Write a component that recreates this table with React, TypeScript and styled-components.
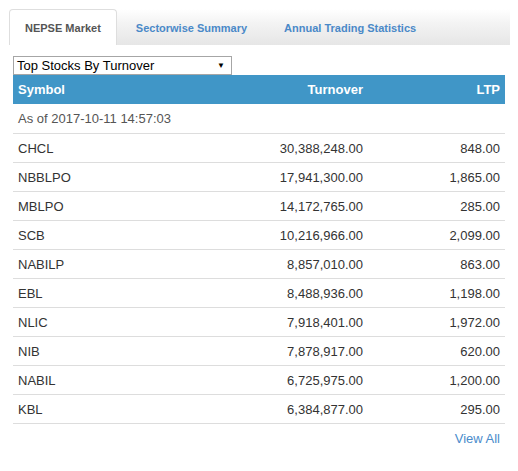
import React from "react";
import styled, { createGlobalStyle } from "styled-components";

const Global = createGlobalStyle`
  html, body { margin: 0; padding: 0; background: #fff; }
  body { font-family: "Liberation Sans", Arial, sans-serif; }
`;

const Wrapper = styled.div`
  width: 501px;
  padding: 9px 0 0 9px;
`;

const TabBar = styled.div`
  display: flex;
  align-items: stretch;
  height: 36px;
  background: linear-gradient(to bottom, #ffffff 0%, #f3f3f3 40%, #e6e6e6 100%);
`;

const Tab = styled.div<{ $active?: boolean }>`
  display: flex;
  align-items: center;
  padding: ${(p) => (p.$active ? "0 15px" : "0 17px")};
  font-size: 11px;
  font-weight: bold;
  color: ${(p) => (p.$active ? "#555" : "#4a89c8")};
  background: ${(p) => (p.$active ? "#fff" : "transparent")};
  border: 1px solid ${(p) => (p.$active ? "#dedede" : "transparent")};
  border-bottom: none;
  border-radius: 4px 4px 0 0;
  margin-right: 1px;
`;

const Panel = styled.div`
  padding: 11px 5px 0 4px;
`;

const SelectBox = styled.div`
  box-sizing: border-box;
  width: 219px;
  height: 19px;
  border: 1px solid #a6a6a6;
  display: flex;
  align-items: center;
  justify-content: space-between;
  padding: 0 6px 0 3px;
  font-size: 13px;
  color: #000;
`;

const Arrow = styled.span`
  font-size: 8px;
  color: #000;
`;

const Table = styled.div`
  width: 492px;
`;

const Row = styled.div<{ $head?: boolean }>`
  display: grid;
  grid-template-columns: 1fr 150px 137px;
  height: ${(p) => (p.$head ? "29px" : "28px")};
  align-items: center;
  font-size: 13px;
  background: ${(p) => (p.$head ? "#4096c7" : "#fff")};
  color: ${(p) => (p.$head ? "#fff" : "#333")};
  font-weight: ${(p) => (p.$head ? "bold" : "normal")};
  border-bottom: ${(p) => (p.$head ? "none" : "1px solid #dddddd")};
`;

const Cell = styled.div<{ $right?: boolean }>`
  padding: 0 5px;
  text-align: ${(p) => (p.$right ? "right" : "left")};
  white-space: nowrap;
`;

const AsOf = styled.div`
  height: 29px;
  display: flex;
  align-items: center;
  padding: 0 5px;
  font-size: 13px;
  color: #555;
  border-bottom: 1px solid #dddddd;
`;

const Footer = styled.div`
  display: flex;
  justify-content: flex-end;
  padding: 7px 5px 0 0;
`;

const ViewAll = styled.a`
  font-size: 13px;
  color: #4a8ccb;
  text-decoration: none;
`;

const data: [string, string, string][] = [
  ["CHCL", "30,388,248.00", "848.00"],
  ["NBBLPO", "17,941,300.00", "1,865.00"],
  ["MBLPO", "14,172,765.00", "285.00"],
  ["SCB", "10,216,966.00", "2,099.00"],
  ["NABILP", "8,857,010.00", "863.00"],
  ["EBL", "8,488,936.00", "1,198.00"],
  ["NLIC", "7,918,401.00", "1,972.00"],
  ["NIB", "7,878,917.00", "620.00"],
  ["NABIL", "6,725,975.00", "1,200.00"],
  ["KBL", "6,384,877.00", "295.00"],
];

export default function App() {
  return (
    <>
      <Global />
      <Wrapper>
        <TabBar>
          <Tab $active>NEPSE Market</Tab>
          <Tab>Sectorwise Summary</Tab>
          <Tab>Annual Trading Statistics</Tab>
        </TabBar>
        <Panel>
          <SelectBox>
            <span>Top Stocks By Turnover</span>
            <Arrow>▼</Arrow>
          </SelectBox>
          <Table>
            <Row $head>
              <Cell>Symbol</Cell>
              <Cell $right>Turnover</Cell>
              <Cell $right>LTP</Cell>
            </Row>
            <AsOf>As of 2017-10-11 14:57:03</AsOf>
            {data.map(([s, t, l]) => (
              <Row key={s}>
                <Cell>{s}</Cell>
                <Cell $right>{t}</Cell>
                <Cell $right>{l}</Cell>
              </Row>
            ))}
          </Table>
          <Footer>
            <ViewAll href="#">View All</ViewAll>
          </Footer>
        </Panel>
      </Wrapper>
    </>
  );
}
